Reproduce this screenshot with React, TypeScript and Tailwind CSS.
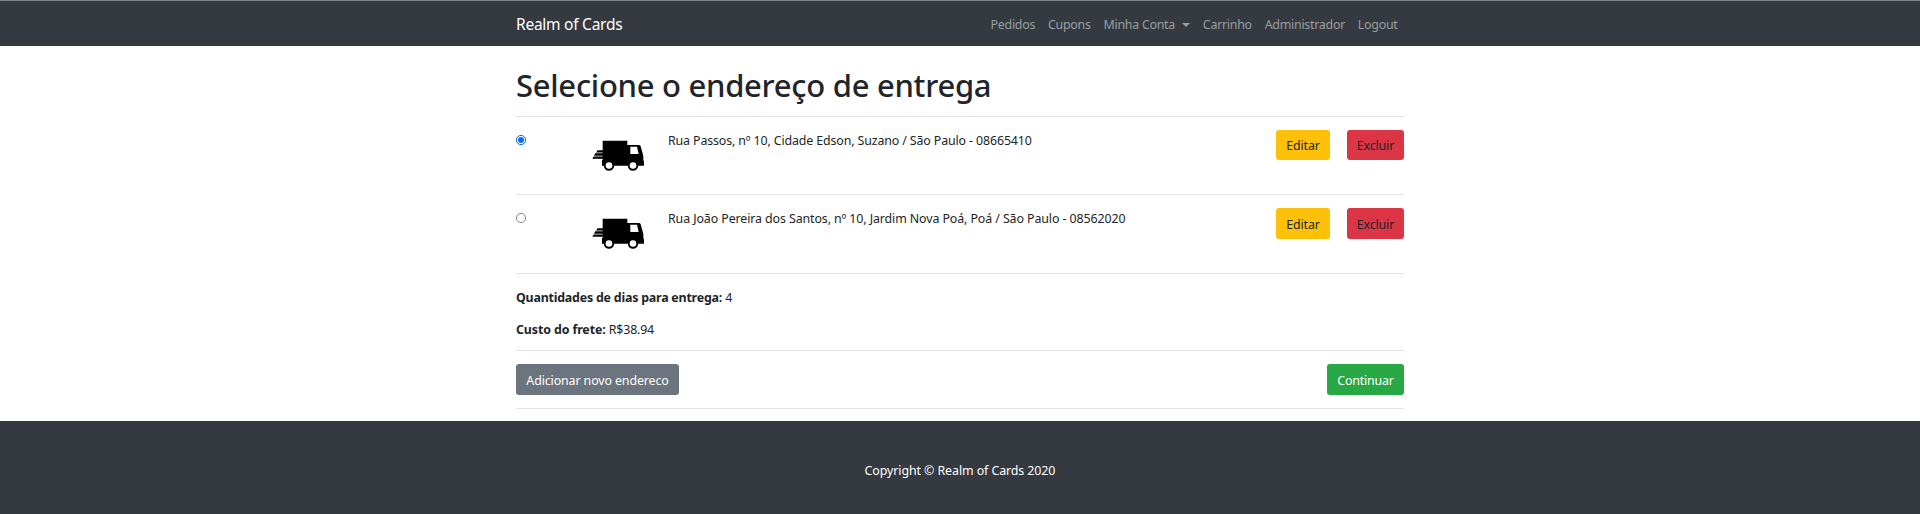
const addresses = [
  { text: "Rua Passos, nº 10, Cidade Edson, Suzano / São Paulo - 08665410", selected: true, tracking: "tracking-[-0.125px]" },
  { text: "Rua João Pereira dos Santos, nº 10, Jardim Nova Poá, Poá / São Paulo - 08562020", selected: false, tracking: "tracking-[-0.095px]" },
];

function Radio({ checked }: { checked: boolean }) {
  return (
    <svg width="12" height="12" viewBox="0 0 12 12" role="radio" aria-checked={checked}>
      <circle cx="6" cy="6" r="4.6" fill="#fff" stroke={checked ? "#0b6bf2" : "#767676"} strokeWidth={checked ? 1 : 0.9} />
      {checked && <circle cx="6" cy="6" r="3" fill="#0b6bf2" />}
    </svg>
  );
}

function Truck() {
  return (
    <svg width="54" height="32" viewBox="36 60 162 96" fill="#000">
      <path d="M68 62H142V75H176Q181 75 182 79L190 108V120Q192 122 192 128V137H68Z" />
      <path d="M66 120H70V137H66Z" />
      <path d="M53 90.5H69V97.5H48ZM46 100H69V107H42ZM41 109.5H69V116H37Z" />
      <circle cx="87" cy="137" r="15.5" />
      <circle cx="159" cy="137" r="15.5" />
      <path d="M151 80H171L176 102H151Z" fill="#fff" />
      <circle cx="87" cy="136.5" r="10" fill="#fff" />
      <circle cx="159" cy="136.5" r="10" fill="#fff" />
    </svg>
  );
}

export default function App() {
  return (
    <div className="flex h-[514px] flex-col bg-white font-['Noto_Sans',sans-serif] text-[12.4px] leading-[19px] whitespace-nowrap text-[#212529]">
      <header className="h-[46px] shrink-0 border-t border-[#85898d] bg-[#343a40]">
        <div className="mx-auto flex h-full w-[888px] items-center justify-between">
          <a className="pt-px text-[15.5px] leading-6 tracking-[-0.25px] text-white">Realm of Cards</a>
          <nav className="flex gap-[12.8px] pt-[2px] pr-[6.4px] tracking-[-0.25px] text-[#9a9da0]">
            <a>Pedidos</a>
            <a>Cupons</a>
            <a className="flex items-center">
              Minha Conta
              <span className="ml-[7px] border-x-[4px] border-t-[4px] border-x-transparent border-t-[#9a9da0]" />
            </a>
            <a>Carrinho</a>
            <a>Administrador</a>
            <a>Logout</a>
          </nav>
        </div>
      </header>

      <main className="mx-auto h-[375px] w-[888px] shrink-0">
        <h1 className="h-[70px] pt-5 text-[31px] leading-[38px] font-medium tracking-[-0.28px]">Selecione o endereço de entrega</h1>
        {addresses.map((a, i) => (
          <section key={a.text} className={`flex border-t border-[#e5e5e5] ${i === 0 ? "h-[78px]" : "h-[79px]"}`}>
            <div className="-ml-px w-[77px] pt-[17px]"><Radio checked={a.selected} /></div>
            <div className="w-[76px] pt-[23px]"><Truck /></div>
            <p className={`flex-1 pt-[14px] ${a.tracking}`}>{a.text}</p>
            <div className="flex gap-[17px] pt-[13px] tracking-[-0.15px]">
              <button className={`w-[54px] rounded-[3px] bg-[#ffc107] ${i === 0 ? "h-[30px]" : "h-[31px] pt-[2px]"}`}>Editar</button>
              <button className={`w-[57px] rounded-[3px] bg-[#dc3545] ${i === 0 ? "h-[30px]" : "h-[31px] pt-[2px]"}`}>Excluir</button>
            </div>
          </section>
        ))}
        <section className="h-[77px] border-t border-[#e5e5e5] pt-[14px]">
          <p className="mb-[13px]"><b className="tracking-[-0.2px]">Quantidades de dias para entrega:</b> 4</p>
          <p><b className="tracking-[-0.1px]">Custo do frete:</b> <span className="tracking-[-0.2px]">R$38.94</span></p>
        </section>
        <section className="flex h-[59px] items-start justify-between border-y border-[#e5e5e5] pt-[13px] text-white">
          <button className="h-[31px] w-[163px] rounded-[3px] bg-[#6c757d] pt-[2px] tracking-[-0.11px]">Adicionar novo endereco</button>
          <button className="h-[31px] w-[77px] rounded-[3px] bg-[#28a745] pt-[2px] tracking-[-0.18px]">Continuar</button>
        </section>
      </main>

      <footer className="flex flex-1 items-center justify-center bg-[#343a40] pt-[6px] tracking-[-0.08px] text-white">
        Copyright © Realm of Cards 2020
      </footer>
    </div>
  );
}
